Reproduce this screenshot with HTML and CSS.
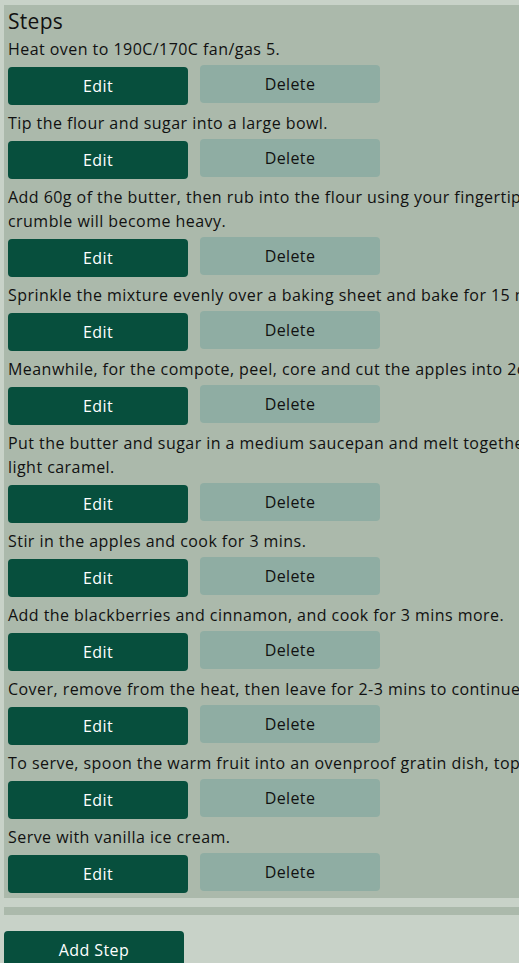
FILE: index.html
```html
<!DOCTYPE html>
<html lang="en">
<head>
<meta charset="utf-8">
<title>Steps</title>
<link rel="stylesheet" href="styles.css">
</head>
<body>
<div class="page">
  <section class="panel">
    <h2 class="title">Steps</h2>
    <div class="step">
      <p class="step-text">Heat oven to 190C/170C fan/gas 5.</p>
      <div class="actions"><button class="btn btn-edit">Edit</button><button class="btn btn-delete">Delete</button></div>
    </div>
    <div class="step">
      <p class="step-text">Tip the flour and sugar into a large bowl.</p>
      <div class="actions"><button class="btn btn-edit">Edit</button><button class="btn btn-delete">Delete</button></div>
    </div>
    <div class="step">
      <p class="step-text">Add 60g of the butter, then rub into the flour using your fingertips to make a pebbly crumble. Don't rub in too much as the<br>crumble will become heavy.</p>
      <div class="actions"><button class="btn btn-edit">Edit</button><button class="btn btn-delete">Delete</button></div>
    </div>
    <div class="step">
      <p class="step-text">Sprinkle the mixture evenly over a baking sheet and bake for 15 mins until lightly coloured.</p>
      <div class="actions"><button class="btn btn-edit">Edit</button><button class="btn btn-delete">Delete</button></div>
    </div>
    <div class="step">
      <p class="step-text">Meanwhile, for the compote, peel, core and cut the apples into 2cm dice.</p>
      <div class="actions"><button class="btn btn-edit">Edit</button><button class="btn btn-delete">Delete</button></div>
    </div>
    <div class="step">
      <p class="step-text">Put the butter and sugar in a medium saucepan and melt together over a medium heat. Cook for 3 mins until the mixture turns to a<br>light caramel.</p>
      <div class="actions"><button class="btn btn-edit">Edit</button><button class="btn btn-delete">Delete</button></div>
    </div>
    <div class="step">
      <p class="step-text">Stir in the apples and cook for 3 mins.</p>
      <div class="actions"><button class="btn btn-edit">Edit</button><button class="btn btn-delete">Delete</button></div>
    </div>
    <div class="step">
      <p class="step-text">Add the blackberries and cinnamon, and cook for 3 mins more.</p>
      <div class="actions"><button class="btn btn-edit">Edit</button><button class="btn btn-delete">Delete</button></div>
    </div>
    <div class="step">
      <p class="step-text">Cover, remove from the heat, then leave for 2-3 mins to continue softening.</p>
      <div class="actions"><button class="btn btn-edit">Edit</button><button class="btn btn-delete">Delete</button></div>
    </div>
    <div class="step">
      <p class="step-text">To serve, spoon the warm fruit into an ovenproof gratin dish, top with the crumble mix, then reheat in the oven for 5-10 mins.</p>
      <div class="actions"><button class="btn btn-edit">Edit</button><button class="btn btn-delete">Delete</button></div>
    </div>
    <div class="step">
      <p class="step-text">Serve with vanilla ice cream.</p>
      <div class="actions"><button class="btn btn-edit">Edit</button><button class="btn btn-delete">Delete</button></div>
    </div>
  </section>
  <div class="divider"></div>
  <button class="btn btn-add">Add Step</button>
</div>
</body>
</html>
```
FILE: styles.css
```css
html, body {
  margin: 0;
  padding: 0;
  background: #c8d2c8;
  overflow: hidden;
}
body {
  font-family: "Open Sans", "Noto Sans", sans-serif;
  color: #111;
}
.page {
  width: 1100px;
  padding: 5px 0 0 4px;
  display: flex;
  flex-direction: column;
  align-items: flex-start;
}
.panel {
  align-self: stretch;
  background: #abb9ab;
  padding: 0 4px 5px 4px;
}
.title {
  margin: 0;
  font-weight: 400;
  font-size: 21px;
  line-height: 32px;
  letter-spacing: 0.3px;
  color: #111;
}
.step {
  display: flex;
  flex-direction: column;
  margin-bottom: 6px;
}
.step:last-child {
  margin-bottom: 0;
}
.step-text {
  margin: 0;
  font-size: 16px;
  line-height: 24px;
  letter-spacing: 0.45px;
  white-space: nowrap;
}
.actions {
  display: flex;
  align-items: flex-start;
  gap: 12px;
  margin-top: 4px;
}
.btn {
  width: 180px;
  height: 38px;
  border: none;
  border-radius: 4px;
  font-family: inherit;
  font-size: 16px;
  letter-spacing: 0.4px;
  padding: 0;
  cursor: pointer;
}
.btn-edit {
  margin-top: 2px;
  background: #074f3d;
  color: #fff;
}
.btn-delete {
  background: #8fada3;
  color: #111;
}
.divider {
  align-self: stretch;
  height: 8px;
  margin-top: 9px;
  background: #abb9ab;
}
.btn-add {
  margin-top: 16px;
  background: #074f3d;
  color: #fff;
}
```
